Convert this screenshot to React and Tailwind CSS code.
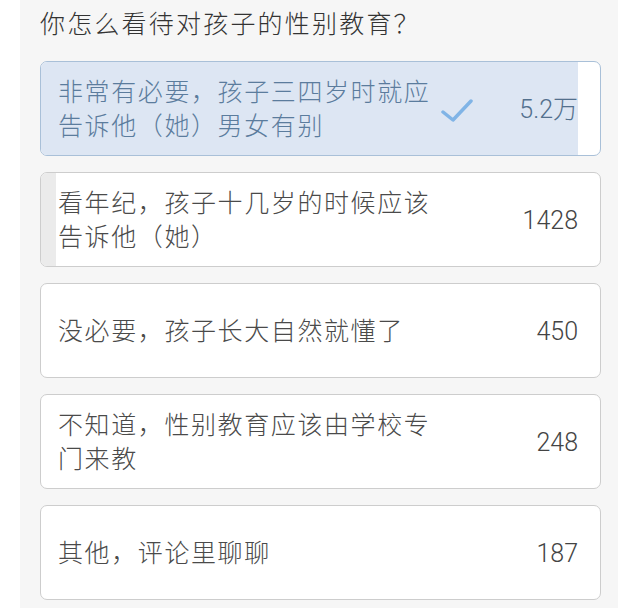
const OPTIONS = [
  { text: ["非常有必要，孩子三四岁时就应", "告诉他（她）男女有别"], count: "5.2万", pct: 96, chosen: true },
  { text: ["看年纪，孩子十几岁的时候应该", "告诉他（她）"], count: "1428", pct: 2.7 },
  { text: ["没必要，孩子长大自然就懂了"], count: "450", pct: 0 },
  { text: ["不知道，性别教育应该由学校专", "门来教"], count: "248", pct: 0 },
  { text: ["其他，评论里聊聊"], count: "187", pct: 0 },
];

function Check() {
  return (
    <svg width="32" height="26" viewBox="0 0 32 26" className="shrink-0">
      <path d="M2 14 L12 22 L30 3" fill="none" stroke="#80b4e6" strokeWidth="3.5" strokeLinecap="round" strokeLinejoin="round" />
    </svg>
  );
}

function Option({ opt }) {
  return (
    <div
      className={
        "relative h-[95px] rounded-[7px] border overflow-hidden bg-white " +
        (opt.chosen ? "border-[#a9c0d8]" : "border-[#cdcdcd]")
      }
    >
      {opt.pct > 0 && (
        <div
          className={"absolute inset-y-0 left-0 " + (opt.chosen ? "bg-[#dde6f3]" : "bg-[#ebebeb]")}
          style={{ width: opt.pct + "%" }}
        />
      )}
      <div className="relative flex h-full items-center pl-[17px] pr-[22px] pt-[3px]">
        <div
          className={
            "flex-1 text-[25px] font-light leading-[34px] tracking-[1.6px] " +
            (opt.chosen ? "text-[#5b7c9d]" : "text-[#4a4a4a]")
          }
        >
          {opt.text.map((t) => (
            <div key={t}>{t}</div>
          ))}
        </div>
        {opt.chosen && (
          <div className="mr-[46px] mt-[2px]">
            <Check />
          </div>
        )}
        <div className={"text-[25px] font-light " + (opt.chosen ? "text-[#53708d]" : "text-[#444]")}>{opt.count}</div>
      </div>
    </div>
  );
}

export default function App() {
  return (
    <div
      className="w-[640px] h-[613px] bg-white pl-[20px] pr-[22px]"
      style={{ fontFamily: '"Roboto", "Noto Sans CJK SC", sans-serif' }}
    >
      <div className="h-[608px] bg-[#f6f6f6] pl-[20px] pr-[17px] pt-[7px]">
        <h1 className="text-[25px] font-light leading-[36px] text-[#333] tracking-[2.2px] mb-[18px]">你怎么看待对孩子的性别教育？</h1>
        <div className="flex flex-col gap-[16px]">
          {OPTIONS.map((o) => (
            <Option key={o.count} opt={o} />
          ))}
        </div>
      </div>
    </div>
  );
}
